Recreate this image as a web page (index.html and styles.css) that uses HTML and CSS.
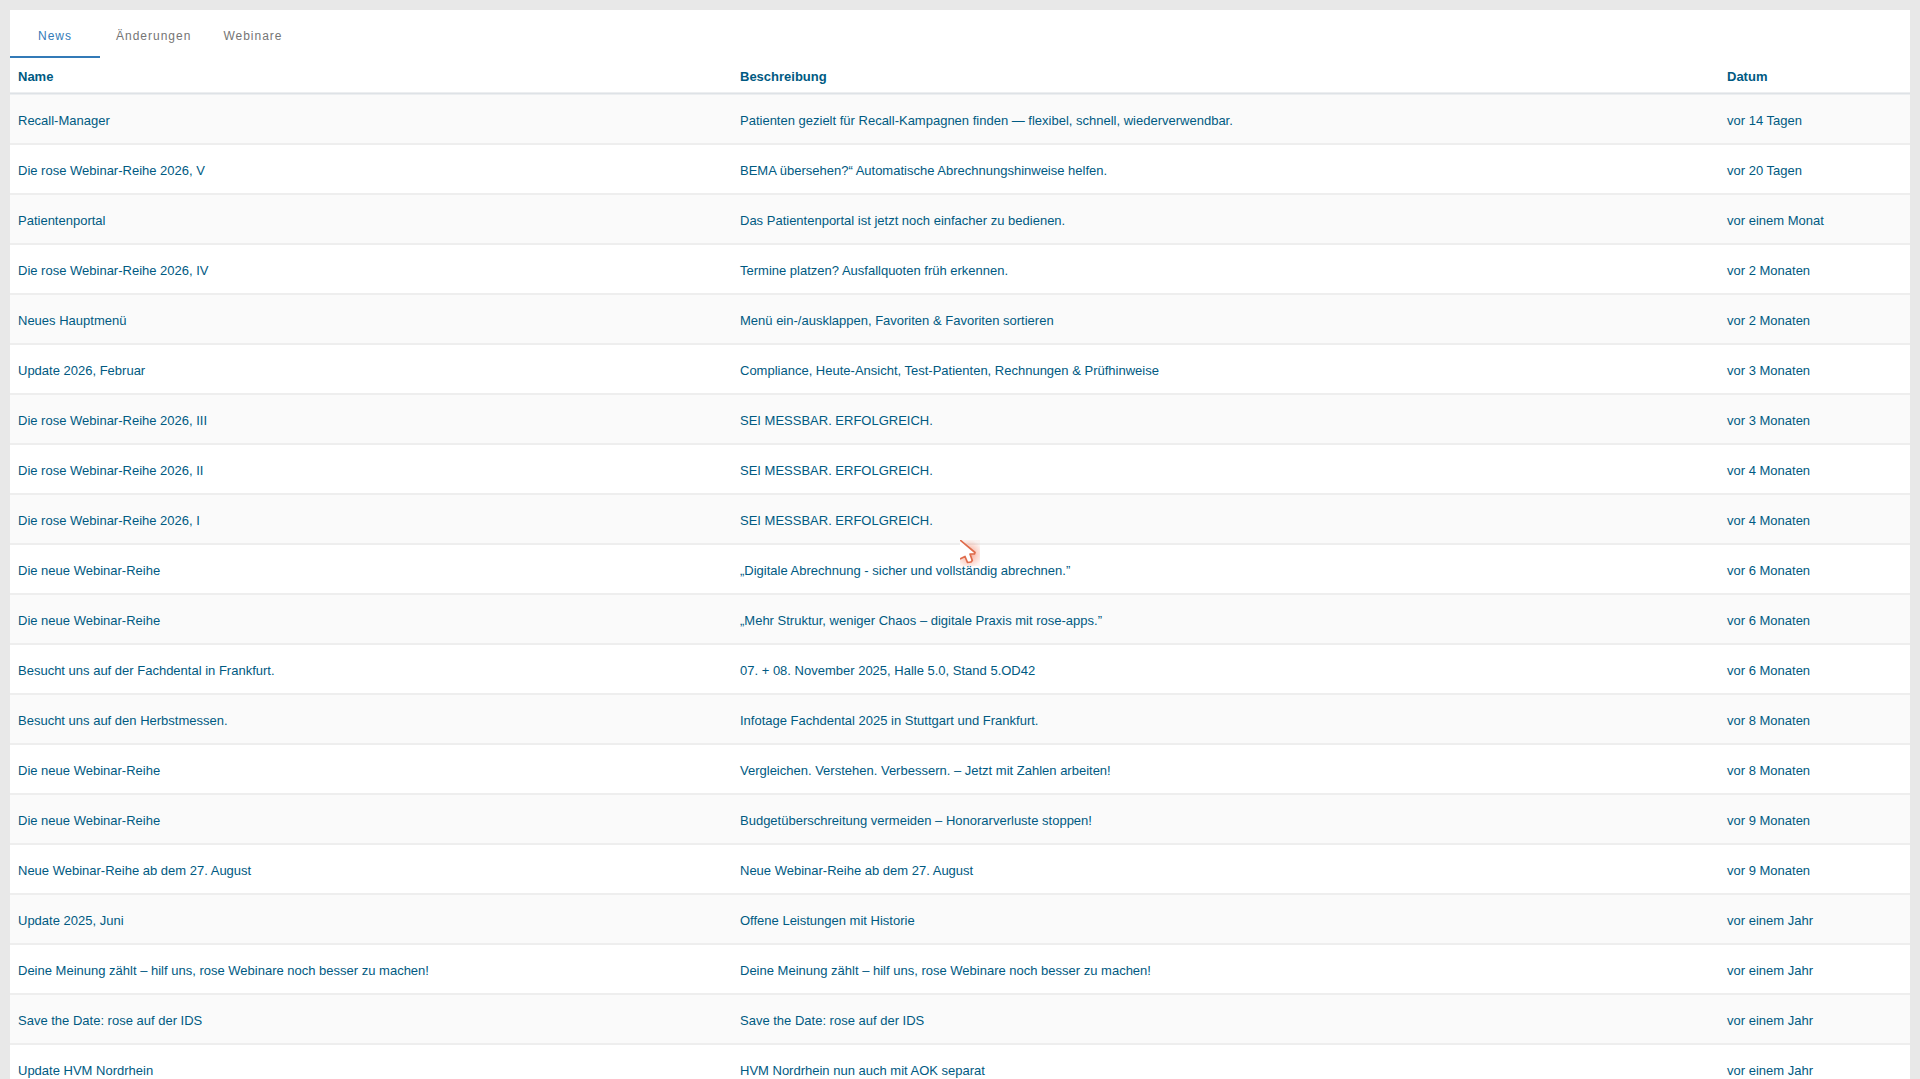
FILE: index.html
```html
<!DOCTYPE html>
<html lang="de">
<head>
  <meta charset="UTF-8">
  <meta name="viewport" content="width=device-width, initial-scale=1.0">
  <title>News</title>
  <link rel="stylesheet" href="styles.css">
</head>

<body>
  <main class="panel">
    <nav class="tabs">
      <a href="#news" class="tab active">News</a>
      <a href="#changes" class="tab">Änderungen</a>
      <a href="#webinars" class="tab">Webinare</a>
    </nav>
    <table class="news-table">
      <colgroup>
        <col class="col-name">
        <col>
        <col class="col-date">
      </colgroup>
      <thead>
        <tr><th>Name</th><th>Beschreibung</th><th>Datum</th></tr>
      </thead>
      <tbody>
        <tr><td>Recall-Manager</td><td>Patienten gezielt für Recall-Kampagnen finden — flexibel, schnell, wiederverwendbar.</td><td>vor 14 Tagen</td></tr>
        <tr><td>Die rose Webinar-Reihe 2026, V</td><td>BEMA übersehen?“ Automatische Abrechnungshinweise helfen.</td><td>vor 20 Tagen</td></tr>
        <tr><td>Patientenportal</td><td>Das Patientenportal ist jetzt noch einfacher zu bedienen.</td><td>vor einem Monat</td></tr>
        <tr><td>Die rose Webinar-Reihe 2026, IV</td><td>Termine platzen? Ausfallquoten früh erkennen.</td><td>vor 2 Monaten</td></tr>
        <tr><td>Neues Hauptmenü</td><td>Menü ein-/ausklappen, Favoriten &amp; Favoriten sortieren</td><td>vor 2 Monaten</td></tr>
        <tr><td>Update 2026, Februar</td><td>Compliance, Heute-Ansicht, Test-Patienten, Rechnungen &amp; Prüfhinweise</td><td>vor 3 Monaten</td></tr>
        <tr><td>Die rose Webinar-Reihe 2026, III</td><td>SEI MESSBAR. ERFOLGREICH.</td><td>vor 3 Monaten</td></tr>
        <tr><td>Die rose Webinar-Reihe 2026, II</td><td>SEI MESSBAR. ERFOLGREICH.</td><td>vor 4 Monaten</td></tr>
        <tr><td>Die rose Webinar-Reihe 2026, I</td><td>SEI MESSBAR. ERFOLGREICH.</td><td>vor 4 Monaten</td></tr>
        <tr><td>Die neue Webinar-Reihe</td><td>„Digitale Abrechnung - sicher und vollständig abrechnen.”</td><td>vor 6 Monaten</td></tr>
        <tr><td>Die neue Webinar-Reihe</td><td>„Mehr Struktur, weniger Chaos – digitale Praxis mit rose-apps.”</td><td>vor 6 Monaten</td></tr>
        <tr><td>Besucht uns auf der Fachdental in Frankfurt.</td><td>07. + 08. November 2025, Halle 5.0, Stand 5.OD42</td><td>vor 6 Monaten</td></tr>
        <tr><td>Besucht uns auf den Herbstmessen.</td><td>Infotage Fachdental 2025 in Stuttgart und Frankfurt.</td><td>vor 8 Monaten</td></tr>
        <tr><td>Die neue Webinar-Reihe</td><td>Vergleichen. Verstehen. Verbessern. – Jetzt mit Zahlen arbeiten!</td><td>vor 8 Monaten</td></tr>
        <tr><td>Die neue Webinar-Reihe</td><td>Budgetüberschreitung vermeiden – Honorarverluste stoppen!</td><td>vor 9 Monaten</td></tr>
        <tr><td>Neue Webinar-Reihe ab dem 27. August</td><td>Neue Webinar-Reihe ab dem 27. August</td><td>vor 9 Monaten</td></tr>
        <tr><td>Update 2025, Juni</td><td>Offene Leistungen mit Historie</td><td>vor einem Jahr</td></tr>
        <tr><td>Deine Meinung zählt – hilf uns, rose Webinare noch besser zu machen!</td><td>Deine Meinung zählt – hilf uns, rose Webinare noch besser zu machen!</td><td>vor einem Jahr</td></tr>
        <tr><td>Save the Date: rose auf der IDS</td><td>Save the Date: rose auf der IDS</td><td>vor einem Jahr</td></tr>
        <tr><td>Update HVM Nordrhein</td><td>HVM Nordrhein nun auch mit AOK separat</td><td>vor einem Jahr</td></tr>
      </tbody>
    </table>
  </main>

  <svg class="pointer" viewBox="0 0 20 26" aria-hidden="true">
    <defs>
      <radialGradient id="glow" cx="9" cy="14" r="14" gradientUnits="userSpaceOnUse">
        <stop offset="0" stop-color="#f0603c" stop-opacity=".6"/>
        <stop offset=".5" stop-color="#f0603c" stop-opacity=".3"/>
        <stop offset="1" stop-color="#f0603c" stop-opacity=".06"/>
      </radialGradient>
    </defs>
    <rect width="20" height="26" fill="url(#glow)"/>
    <path d="M0 0L15 13L10 14L12 20L8 23L5 16L0 19Z" fill="#fff"/>
    <path d="M0 0L15 12.5L14.5 14L10 14L12.3 20.5L11 22L7.5 22.5L5 16.5L0 19" fill="none" stroke="#df6c4c" stroke-width="1.7" stroke-linejoin="round"/>
  </svg>
</body>
</html>
```
FILE: styles.css
```css
* {
  box-sizing: border-box;
}

body {
  margin: 0;
  padding: 10px;
  background-color: #e8e8e8;
  color: #005a82;
  font-family: "Liberation Sans", Arial, sans-serif;
  font-size: 13px;
  line-height: 20px;
}

.panel {
  background-color: #fff;
}

.tabs {
  display: flex;
}

.tab {
  min-width: 90px;
  height: 48px;
  padding: 16px 16px 0;
  border-bottom: 2px solid transparent;
  color: #757575;
  font-size: 12px;
  letter-spacing: 1px;
  text-align: center;
  text-decoration: none;
}

.tab.active {
  border-bottom-color: #337ab7;
  color: #337ab7;
}

.news-table {
  width: 100%;
  border-collapse: separate;
  border-spacing: 0;
  table-layout: fixed;
}

.col-name {
  width: 38%;
}

.col-date {
  width: 191px;
}

th {
  height: 37px;
  padding: 2px 8px 0;
  border-bottom: 1px solid #eceef0;
  box-shadow: inset 0 -1px #dee2e6, inset 0 -2px #eceef0;
  text-align: left;
}

td {
  height: 50px;
  padding: 4px 8px 0;
  border-bottom: 2px solid #eee;
}

tbody tr:nth-child(odd) {
  background-color: #fafafa;
}

tbody tr {
  cursor: pointer;
}

/* lies over the middle of the window */
.pointer {
  position: fixed;
  top: 50%;
  left: 50%;
  width: 20px;
  height: 26px;
  pointer-events: none;
}
```
